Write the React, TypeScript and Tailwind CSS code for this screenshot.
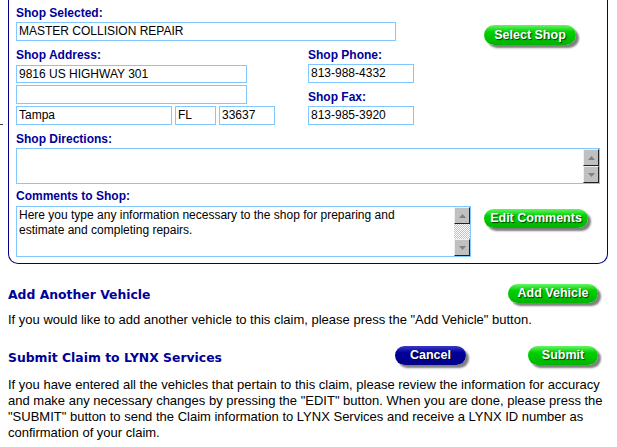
import React from "react";

const SANS = "font-['Liberation_Sans',Arial,sans-serif]";
const LBL = `text-[12px] leading-[14px] font-bold text-[#000099] ${SANS}`;
const INP = `border border-[#80c8ff] bg-white text-[12px] leading-[16px] text-black pl-[2px] whitespace-nowrap overflow-hidden ${SANS}`;
const H2 = "text-[12.4px] leading-[16px] font-bold text-[#000099] font-['DejaVu_Sans',Verdana,sans-serif]";
const BODY = `text-[13px] leading-[16px] text-black ${SANS}`;

function Pill({ label, className, navy }: { label: string; className: string; navy?: boolean }) {
  const bg = navy
    ? "bg-[linear-gradient(to_bottom,#3a3ac8_0%,#000099_35%,#000088_100%)]"
    : "bg-[linear-gradient(to_bottom,#66f566_0%,#00d000_35%,#00b400_100%)]";
  return (
    <div
      className={`${className} ${bg} rounded-full flex items-center justify-center text-white font-bold text-[12.5px] leading-none ${SANS} shadow-[3px_3px_2px_rgba(0,0,0,0.5)] [text-shadow:1px_1px_1px_rgba(0,0,0,0.7)] shrink-0`}
    >
      {label}
    </div>
  );
}

function SB({ dir }: { dir: "up" | "down" }) {
  return (
    <div className="w-[16px] h-[17px] bg-[#c0c0c0] border-t border-l border-t-[#f0f0f0] border-l-[#f0f0f0] border-b border-r border-b-[#202020] border-r-[#202020] flex items-center justify-center">
      <svg width="7" height="4" viewBox="0 0 7 4">
        <path d={dir === "up" ? "M3.5 0L7 4H0Z" : "M0 0H7L3.5 4Z"} fill="#808080" />
      </svg>
    </div>
  );
}

export default function App() {
  return (
    <div className="relative w-[617px] h-[447px] bg-white overflow-hidden">
      <div className="absolute left-0 top-[124px] w-[3px] h-px bg-[#404040]" />

      {/* Shop panel */}
      <div className="ml-[8px] w-[600px] border-x border-b border-[#000080] rounded-b-[10px] pl-[7px] pb-[6px]">
        {/* Row 1 */}
        <div className="flex items-start h-[41px] pt-[6px]">
          <div className="w-[380px] flex flex-col">
            <div className={LBL}>Shop Selected:</div>
            <div className={`${INP} mt-[2px] h-[19px]`}>MASTER COLLISION REPAIR</div>
          </div>
          <Pill label="Select Shop" className="ml-[88px] mt-[19px] w-[92px] h-[20px]" />
        </div>

        {/* Row 2 */}
        <div className="flex mt-[7px]">
          <div className="w-[292px] flex flex-col">
            <div className={LBL}>Shop Address:</div>
            <div className={`${INP} mt-[3px] h-[18px] w-[231px]`}>9816 US HIGHWAY 301</div>
            <div className={`${INP} mt-[2px] h-[19px] w-[231px]`}></div>
            <div className="flex gap-[3px] mt-[2px]">
              <div className={`${INP} h-[19px] w-[156px]`}>Tampa</div>
              <div className={`${INP} h-[19px] w-[41px]`}>FL</div>
              <div className={`${INP} h-[19px] w-[56px]`}>33637</div>
            </div>
          </div>
          <div className="flex flex-col">
            <div className={LBL}>Shop Phone:</div>
            <div className={`${INP} mt-[2px] h-[19px] w-[106px]`}>813-988-4332</div>
            <div className={`${LBL} mt-[7px]`}>Shop Fax:</div>
            <div className={`${INP} mt-[2px] h-[19px] w-[106px]`}>813-985-3920</div>
          </div>
        </div>

        {/* Directions */}
        <div className={`${LBL} mt-[7px]`}>Shop Directions:</div>
        <div className="mt-[2px] h-[36px] w-[584px] border border-[#80c8ff] bg-white flex justify-end">
          <div className="flex flex-col">
            <SB dir="up" />
            <SB dir="down" />
          </div>
        </div>

        {/* Comments */}
        <div className={`${LBL} mt-[5px]`}>Comments to Shop:</div>
        <div className="flex items-start mt-[3px]">
          <div className="h-[51px] w-[455px] border border-[#80c8ff] bg-white flex">
            <div className={`w-[420px] text-[12px] leading-[15px] text-black ${SANS} pl-[2px] pt-px`}>
              Here you type any information necessary to the shop for preparing and estimate and completing repairs.
            </div>
            <div className="ml-auto flex flex-col w-[16px]">
              <SB dir="up" />
              <div className="flex-1 bg-[repeating-conic-gradient(#c0c0c0_0%_25%,#ffffff_0%_50%)] bg-[length:2px_2px]" />
              <SB dir="down" />
            </div>
          </div>
          <Pill label="Edit Comments" className="ml-[13px] mt-[3px] w-[104px] h-[19px]" />
        </div>
      </div>

      {/* Below panel */}
      <div className="px-[8px]">
        <div className="flex items-start mt-[20px]">
          <div className={`${H2} mt-[3px]`}>Add Another Vehicle</div>
          <Pill label="Add Vehicle" className="ml-auto mr-[11px] w-[90px] h-[19px]" />
        </div>
        <div className={`${BODY} mt-[9px]`}>
          If you would like to add another vehicle to this claim, please press the "Add Vehicle" button.
        </div>

        <div className="flex items-start mt-[18px]">
          <div className={`${H2} mt-[4px]`}>Submit Claim to LYNX Services</div>
          <Pill label="Cancel" navy className="ml-[173px] w-[71px] h-[19px]" />
          <Pill label="Submit" className="ml-auto mr-[11px] w-[70px] h-[19px]" />
        </div>
        <div className={`${BODY} mt-[11px] w-[600px]`}>
          If you have entered all the vehicles that pertain to this claim, please review the information for accuracy and make any necessary changes by pressing the "EDIT" button. When you are done, please press the "SUBMIT" button to send the Claim information to LYNX Services and receive a LYNX ID number as confirmation of your claim.
        </div>
      </div>
    </div>
  );
}
